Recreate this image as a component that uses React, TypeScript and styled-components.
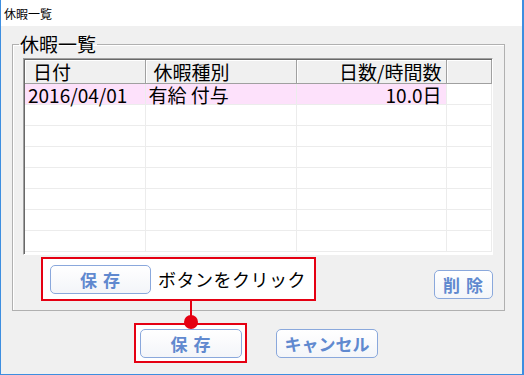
import React from "react"
import styled, { createGlobalStyle } from "styled-components"

const GlobalStyle = createGlobalStyle`
  html, body {
    margin: 0;
    padding: 0;
    background: #ffffff;
  }
  body {
    font-family: "Noto Sans CJK JP", "Noto Sans", sans-serif;
  }
`

const FONT = `"Noto Sans CJK JP", "Noto Sans", sans-serif`
const RED = "#e50012"

const Window = styled.div`
  width: 524px;
  height: 375px;
  box-sizing: border-box;
  border: 1px solid #3d8ee0;
  border-top: none;
  border-right-width: 2px;
  background: #f0f0f0;
  display: flex;
  flex-direction: column;
  position: relative;
  font-family: ${FONT};
`

const TitleBar = styled.div`
  height: 26px;
  flex: none;
  background: #ffffff;
  display: flex;
  align-items: center;
  padding-left: 3px;
  font-size: 12px;
  color: #000;
`

const Body = styled.div`
  flex: 1;
  display: flex;
  flex-direction: column;
  padding: 8px 17px 0 11px;
`

const Group = styled.fieldset`
  margin: 0;
  padding: 4px 11px 9px 10px;
  border: 1px solid #b0b0b0;
  box-shadow: inset 1px 1px 0 #ffffff;
  min-width: 0;
`

const Legend = styled.legend`
  font-size: 19px;
  line-height: 20px;
  padding: 0 1px;
  margin-left: -4px;
  color: #000;
`

const Grid = styled.div`
  border-top: 1px solid #a0a0a0;
  border-left: 1px solid #a0a0a0;
  border-right: 1px solid #ffffff;
  border-bottom: 1px solid #ffffff;
  box-shadow: inset 1px 1px 0 #696969;
  background: #ffffff;
  padding: 1px 0 0 1px;
  height: 194px;
  overflow: hidden;
`

const Table = styled.table`
  border-collapse: collapse;
  table-layout: fixed;
  width: 467px;
  font-size: 19px;
  line-height: 1;
`

const HeadCell = styled.th<{ $align?: string }>`
  height: 23px;
  padding: 0 ${(p) => (p.$align === "right" ? "4px" : "0")} 0 ${(p) => (p.$align === "right" ? "0" : "8px")};
  background: #f0f0f0;
  border-right: 1px solid #a0a0a0;
  border-bottom: 1px solid #a0a0a0;
  box-shadow: inset 1px 1px 0 #ffffff;
  font-weight: normal;
  text-align: ${(p) => p.$align || "left"};
  color: #000;
  white-space: nowrap;
`

const Cell = styled.td<{ $align?: string; $selected?: boolean }>`
  height: 20px;
  padding: 0 ${(p) => (p.$align === "right" ? "4px" : "0")} 0 ${(p) => (p.$align === "right" ? "0" : "3px")};
  border-right: 1px solid #ececec;
  border-bottom: 1px solid #ececec;
  background: ${(p) => (p.$selected ? "#fde1fb" : "#ffffff")};
  text-align: ${(p) => p.$align || "left"};
  color: #000;
  white-space: nowrap;
`

const GroupFooter = styled.div`
  display: flex;
  justify-content: space-between;
  align-items: flex-end;
  margin-top: 2px;
`

const Callout = styled.div`
  width: 275px;
  height: 44px;
  box-sizing: border-box;
  margin-left: 18px;
  border: 2px solid ${RED};
  background: #ffffff;
  display: flex;
  align-items: center;
  gap: 7px;
  padding-left: 7px;
`

const CalloutText = styled.span`
  font-size: 18px;
  color: #000;
  letter-spacing: 0.5px;
`

const Button = styled.button<{ $w: number }>`
  width: ${(p) => p.$w}px;
  height: 29px;
  padding: 0;
  box-sizing: border-box;
  border: 1px solid #8aa8dc;
  border-radius: 5px;
  background: linear-gradient(#ffffff, #f3f5f9);
  color: #6089cf;
  font-family: ${FONT};
  font-size: 17px;
  font-weight: bold;
  letter-spacing: 1px;
  display: flex;
  align-items: center;
  justify-content: center;
  white-space: pre;
`

const DeleteButton = styled(Button)`
  margin-bottom: 2px;
`

const Actions = styled.div`
  display: flex;
  align-items: center;
  gap: 29px;
  margin-top: 12px;
  padding-left: 122px;
`

const Highlight = styled.div`
  border: 2px solid ${RED};
  background: #ffffff;
  padding: 4px 3px 3px 4px;
  display: flex;
`

const Connector = styled.div`
  position: absolute;
  left: 189px;
  top: 299px;
  width: 2px;
  height: 23px;
  background: ${RED};
  z-index: 2;
  &::after {
    content: "";
    position: absolute;
    left: -6px;
    bottom: -7px;
    width: 14px;
    height: 14px;
    border-radius: 50%;
    background: ${RED};
  }
`

const rows = [
  { date: "2016/04/01", kind: "有給 付与", amount: "10.0日", selected: true },
  ...Array.from({ length: 7 }, () => ({ date: "", kind: "", amount: "", selected: false })),
]

export default function App() {
  return (
    <>
      <GlobalStyle />
      <Window>
        <TitleBar>休暇一覧</TitleBar>
        <Body>
          <Group>
            <Legend>休暇一覧</Legend>
            <Grid>
              <Table>
                <colgroup>
                  <col style={{ width: 120 }} />
                  <col style={{ width: 151 }} />
                  <col style={{ width: 150 }} />
                  <col />
                </colgroup>
                <thead>
                  <tr>
                    <HeadCell>日付</HeadCell>
                    <HeadCell>休暇種別</HeadCell>
                    <HeadCell $align="right">日数/時間数</HeadCell>
                    <HeadCell />
                  </tr>
                </thead>
                <tbody>
                  {rows.map((r, i) => (
                    <tr key={i}>
                      <Cell $selected={r.selected}>{r.date}</Cell>
                      <Cell $selected={r.selected}>{r.kind}</Cell>
                      <Cell $selected={r.selected} $align="right">
                        {r.amount}
                      </Cell>
                      <Cell />
                    </tr>
                  ))}
                </tbody>
              </Table>
            </Grid>
            <GroupFooter>
              <Callout>
                <Button $w={101} as="div">
                  保 存
                </Button>
                <CalloutText>ボタンをクリック</CalloutText>
              </Callout>
              <DeleteButton $w={59}>削 除</DeleteButton>
            </GroupFooter>
          </Group>
          <Actions>
            <Highlight>
              <Button $w={102}>保 存</Button>
            </Highlight>
            <Button $w={102} style={{ letterSpacing: 0 }}>
              キャンセル
            </Button>
          </Actions>
        </Body>
        <Connector />
      </Window>
    </>
  )
}
